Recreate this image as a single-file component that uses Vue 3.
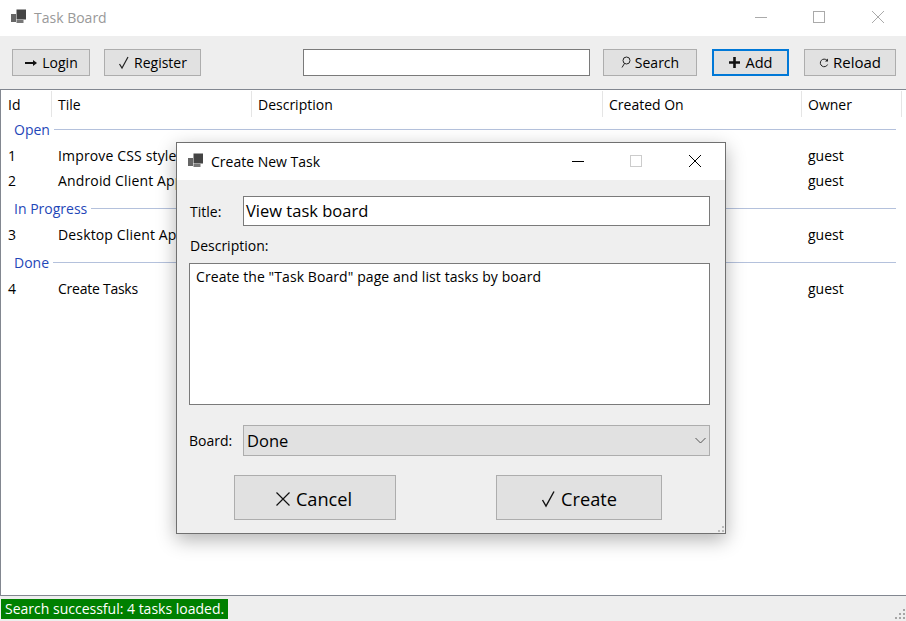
<script setup>
const columns = ['Id', 'Tile', 'Description', 'Created On', 'Owner']
const groups = [
  { name: 'Open', tasks: [
    { id: 1, title: 'Improve CSS styles' },
    { id: 2, title: 'Android Client App' },
  ] },
  { name: 'In Progress', tasks: [{ id: 3, title: 'Desktop Client App' }] },
  { name: 'Done', tasks: [{ id: 4, title: 'Create Tasks' }] },
]
</script>

<template>
  <div class="window">
    <header class="titlebar">
      <svg class="app-icon" width="16" height="16" viewBox="0 0 16 16">
        <rect x="1" y="5" width="5" height="8" fill="#666" />
        <rect x="6.5" y="0.5" width="10" height="10" fill="#444" />
        <rect x="6.5" y="11" width="7" height="3" fill="#777" />
      </svg>
      <span class="app-title">Task Board</span>
      <div class="controls">
        <span class="ctl"><svg width="14" height="14" viewBox="0 0 14 14"><path d="M1 7.5h12" stroke="#aaa" fill="none" /></svg></span>
        <span class="ctl"><svg width="14" height="14" viewBox="0 0 14 14"><rect x="1.5" y="1.5" width="11" height="11" stroke="#aaa" fill="none" /></svg></span>
        <span class="ctl"><svg width="14" height="14" viewBox="0 0 14 14"><path d="M1 1l12 12M13 1L1 13" stroke="#aaa" fill="none" /></svg></span>
      </div>
    </header>

    <div class="toolbar">
      <button class="btn b-login">
        <svg width="14" height="10" viewBox="0 0 14 10"><path d="M1 5h9" stroke="#111" stroke-width="2" fill="none" /><path d="M9 2l4 3-4 3z" fill="#111" /></svg>
        Login
      </button>
      <button class="btn b-register">
        <svg width="12" height="14" viewBox="0 0 12 14"><path d="M1.5 8l2.5 4L10 1" stroke="#222" stroke-width="1.2" fill="none" /></svg>
        Register
      </button>
      <input class="search" type="text" />
      <button class="btn b-search">
        <svg width="10" height="13" viewBox="0 0 10 13"><circle cx="5.5" cy="4.5" r="3.5" stroke="#222" fill="none" /><path d="M3.5 7.5L1 11.5" stroke="#222" fill="none" /></svg>
        Search
      </button>
      <button class="btn b-add">
        <svg width="13" height="13" viewBox="0 0 13 13"><path d="M6.5 1v11M1 6.5h11" stroke="#111" stroke-width="2.6" fill="none" /></svg>
        Add
      </button>
      <button class="btn b-reload">
        <svg class="reload-icon" width="10" height="10" viewBox="0 0 10 10"><path d="M8.6 6.5A3.8 3.8 0 1 1 8 2.4" stroke="#222" fill="none" /><path d="M9 0.5v3H6z" fill="#222" /></svg>
        Reload
      </button>
    </div>

    <main class="list">
      <div class="head">
        <div v-for="c in columns" :key="c" class="col">{{ c }}</div>
      </div>
      <section v-for="g in groups" :key="g.name">
        <div class="group"><span>{{ g.name }}</span><i></i></div>
        <div v-for="t in g.tasks" :key="t.id" class="row">
          <div>{{ t.id }}</div>
          <div class="task-title">{{ t.title }}</div>
          <div></div>
          <div></div>
          <div>guest</div>
        </div>
      </section>
    </main>

    <footer class="status">
      <span class="msg">Search successful: 4 tasks loaded.</span>
      <svg class="grip" width="12" height="12" viewBox="0 0 12 12" fill="#a6a6a6">
        <rect x="9" y="1" width="2" height="2" /><rect x="5" y="5" width="2" height="2" /><rect x="9" y="5" width="2" height="2" />
        <rect x="1" y="9" width="2" height="2" /><rect x="5" y="9" width="2" height="2" /><rect x="9" y="9" width="2" height="2" />
      </svg>
    </footer>

    <div class="dialog">
      <header class="d-title">
        <svg class="app-icon" width="16" height="16" viewBox="0 0 16 16">
          <rect x="1" y="5" width="5" height="8" fill="#666" />
          <rect x="6.5" y="0.5" width="10" height="10" fill="#444" />
          <rect x="6.5" y="11" width="7" height="3" fill="#777" />
        </svg>
        <span class="d-name">Create New Task</span>
        <div class="d-controls">
          <span class="ctl"><svg width="14" height="14" viewBox="0 0 14 14"><path d="M1 7.5h12" stroke="#000" fill="none" /></svg></span>
          <span class="ctl"><svg width="14" height="14" viewBox="0 0 14 14"><rect x="1.5" y="1.5" width="11" height="11" stroke="#ccc" fill="none" /></svg></span>
          <span class="ctl"><svg width="14" height="14" viewBox="0 0 14 14"><path d="M1 1l12 12M13 1L1 13" stroke="#000" fill="none" /></svg></span>
        </div>
      </header>
      <div class="d-body">
        <div class="field">
          <label class="lbl">Title:</label>
          <div class="input title-input">View task board</div>
        </div>
        <label class="lbl desc-label">Description:</label>
        <div class="textarea">Create the "Task Board" page and list tasks by board</div>
        <div class="field board">
          <label class="lbl">Board:</label>
          <div class="select">
            <span>Done</span>
            <svg width="11" height="7" viewBox="0 0 11 7"><path d="M0.5 1l5 5 5-5" stroke="#555" fill="none" /></svg>
          </div>
        </div>
        <div class="actions">
          <button class="big b-cancel">
            <svg width="16" height="16" viewBox="0 0 16 16"><path d="M1.5 1.5l13 13M14.5 1.5l-13 13" stroke="#111" stroke-width="1.2" fill="none" /></svg>
            Cancel
          </button>
          <button class="big b-create">
            <svg width="15" height="18" viewBox="0 0 15 18"><path d="M1.5 10l3.5 6L13 1.5" stroke="#111" stroke-width="1.4" fill="none" /></svg>
            Create
          </button>
        </div>
      </div>
      <svg class="d-grip" width="6" height="6" viewBox="0 0 6 6" fill="#bbb">
        <rect x="4" y="0" width="2" height="2" /><rect x="0" y="4" width="2" height="2" /><rect x="4" y="4" width="2" height="2" />
      </svg>
    </div>
  </div>
</template>

<style scoped>
.window {
  position: relative;
  width: 906px;
  height: 621px;
  display: flex;
  flex-direction: column;
  overflow: hidden;
  background: #fff;
  font-family: "Open Sans", "Liberation Sans", sans-serif;
  font-size: 14px;
  color: #000;
}
.titlebar {
  height: 36px;
  flex: none;
  display: flex;
  align-items: center;
  padding-left: 10px;
}
.app-icon { flex: none; margin-top: -2px; }
.app-title { margin-left: 8px; color: #999; margin-top: -1px; }
.controls { margin-left: auto; display: flex; margin-top: -2px; }
.ctl { width: 58px; display: flex; justify-content: center; align-items: center; }
.controls .ctl:nth-child(2) { margin-right: 2px; }
.controls .ctl:last-child { width: 56px; }
.toolbar {
  height: 53px;
  flex: none;
  background: #eee;
  display: flex;
  align-items: flex-start;
  padding: 13px 10px 0 12px;
  box-sizing: border-box;
}
.btn {
  height: 27px;
  box-sizing: border-box;
  border: 1px solid #adadad;
  background: #e1e1e1;
  font: inherit;
  color: #000;
  padding: 0;
  display: flex;
  align-items: center;
  justify-content: center;
  gap: 4px;
}
.b-login { width: 78px; }
.b-register { width: 97px; margin-left: 14px; margin-right: 102px; }
.search {
  flex: 1;
  min-width: 0;
  height: 27px;
  box-sizing: border-box;
  border: 1px solid #7a7a7a;
  background: #fff;
  padding: 0;
  margin: 0;
}
.b-search { width: 94px; margin-left: 13px; }
.b-add { width: 77px; margin-left: 15px; border: 2px solid #0078d7; font-size: 14.6px; padding-bottom: 1px; }
.b-reload { width: 92px; margin-left: 15px; font-size: 15px; padding-bottom: 2px; }
.reload-icon { margin-top: 3px; }
.list {
  flex: 1;
  min-height: 0;
  box-sizing: border-box;
  border-top: 1px solid #828790;
  border-left: 1px solid #828790;
  border-bottom: 1px solid #828790;
}
.head, .row {
  display: grid;
  grid-template-columns: 51px 200px 351px 199px 100px;
}
.head { height: 27px; margin-bottom: -3px; padding-top: 1px; box-sizing: border-box; }
.col {
  border-right: 1px solid #e5e5e5;
  padding: 3px 0 0 6px;
  line-height: 22px;
  box-sizing: border-box;
}
.col:first-child { padding-left: 7px; }
.group {
  height: 29px;
  display: flex;
  align-items: center;
  padding: 2px 10px 0 13px;
  box-sizing: border-box;
  color: #1f47b8;
  gap: 4px;
}
.group i { flex: 1; height: 1px; background: #b4c1dc; }
.row { height: 25px; line-height: 25px; }
.row > div { padding-left: 6px; white-space: nowrap; overflow: hidden; }
.row > div:first-child { padding-left: 7px; }
.row > .task-title { letter-spacing: 0.15px; }
section:last-child .row > .task-title { letter-spacing: -0.25px; }
.status {
  height: 25px;
  flex: none;
  background: #eee;
  position: relative;
  padding-left: 1px;
}
.msg {
  display: inline-block;
  background: #008000;
  color: #fff;
  height: 20px;
  line-height: 20px;
  margin-top: 3px;
  padding: 0 4px;
}
.grip { position: absolute; right: 0; bottom: 1px; }
.dialog {
  position: absolute;
  left: 176px;
  top: 142px;
  width: 550px;
  height: 392px;
  box-sizing: border-box;
  border: 1px solid #707070;
  background: #efefef;
  box-shadow: 0 6px 18px rgba(0, 0, 0, 0.3);
  display: flex;
  flex-direction: column;
}
.d-title {
  height: 37px;
  flex: none;
  background: #fff;
  display: flex;
  align-items: center;
  padding-left: 10px;
}
.d-title .app-icon { margin-top: -2px; }
.d-name { margin-left: 8px; }
.d-controls { margin-left: auto; display: flex; margin-top: -1px; margin-right: 1px; }
.d-controls .ctl:first-child { width: 56px; }
.d-controls .ctl:nth-child(2) { width: 60px; }
.d-body { padding: 16px 15px 0 12px; display: flex; flex-direction: column; }
.field { display: flex; align-items: center; }
.lbl { width: 54px; flex: none; }
.field:first-child .lbl { padding-left: 1px; width: 53px; }
.input {
  flex: 1;
  height: 30px;
  box-sizing: border-box;
  border: 1px solid #7a7a7a;
  background: #fff;
  font-size: 16.5px;
  line-height: 28px;
  padding-left: 2px;
}
.desc-label { width: auto; margin: 10px 0 0 1px; line-height: 20px; }
.textarea {
  margin-top: 7px;
  height: 142px;
  box-sizing: border-box;
  border: 1px solid #7a7a7a;
  background: #fff;
  padding: 3px 6px;
  line-height: 20px;
  letter-spacing: 0.08px;
}
.board { margin-top: 20px; }
.select {
  flex: 1;
  height: 31px;
  box-sizing: border-box;
  border: 1px solid #adadad;
  background: #e1e1e1;
  display: flex;
  align-items: center;
  justify-content: space-between;
  padding: 0 3px;
  font-size: 16.5px;
}
.actions { display: flex; margin-top: 19px; padding-left: 45px; }
.big {
  height: 45px;
  box-sizing: border-box;
  border: 1px solid #adadad;
  background: #e1e1e1;
  font: inherit;
  font-size: 18.2px;
  color: #000;
  display: flex;
  align-items: center;
  justify-content: center;
  gap: 5px;
  padding: 2px 0 0 0;
}
.b-cancel { width: 162px; padding-right: 3px; }
.b-create { width: 166px; margin-left: 100px; }
.d-grip { position: absolute; right: 1px; bottom: 1px; }
</style>
